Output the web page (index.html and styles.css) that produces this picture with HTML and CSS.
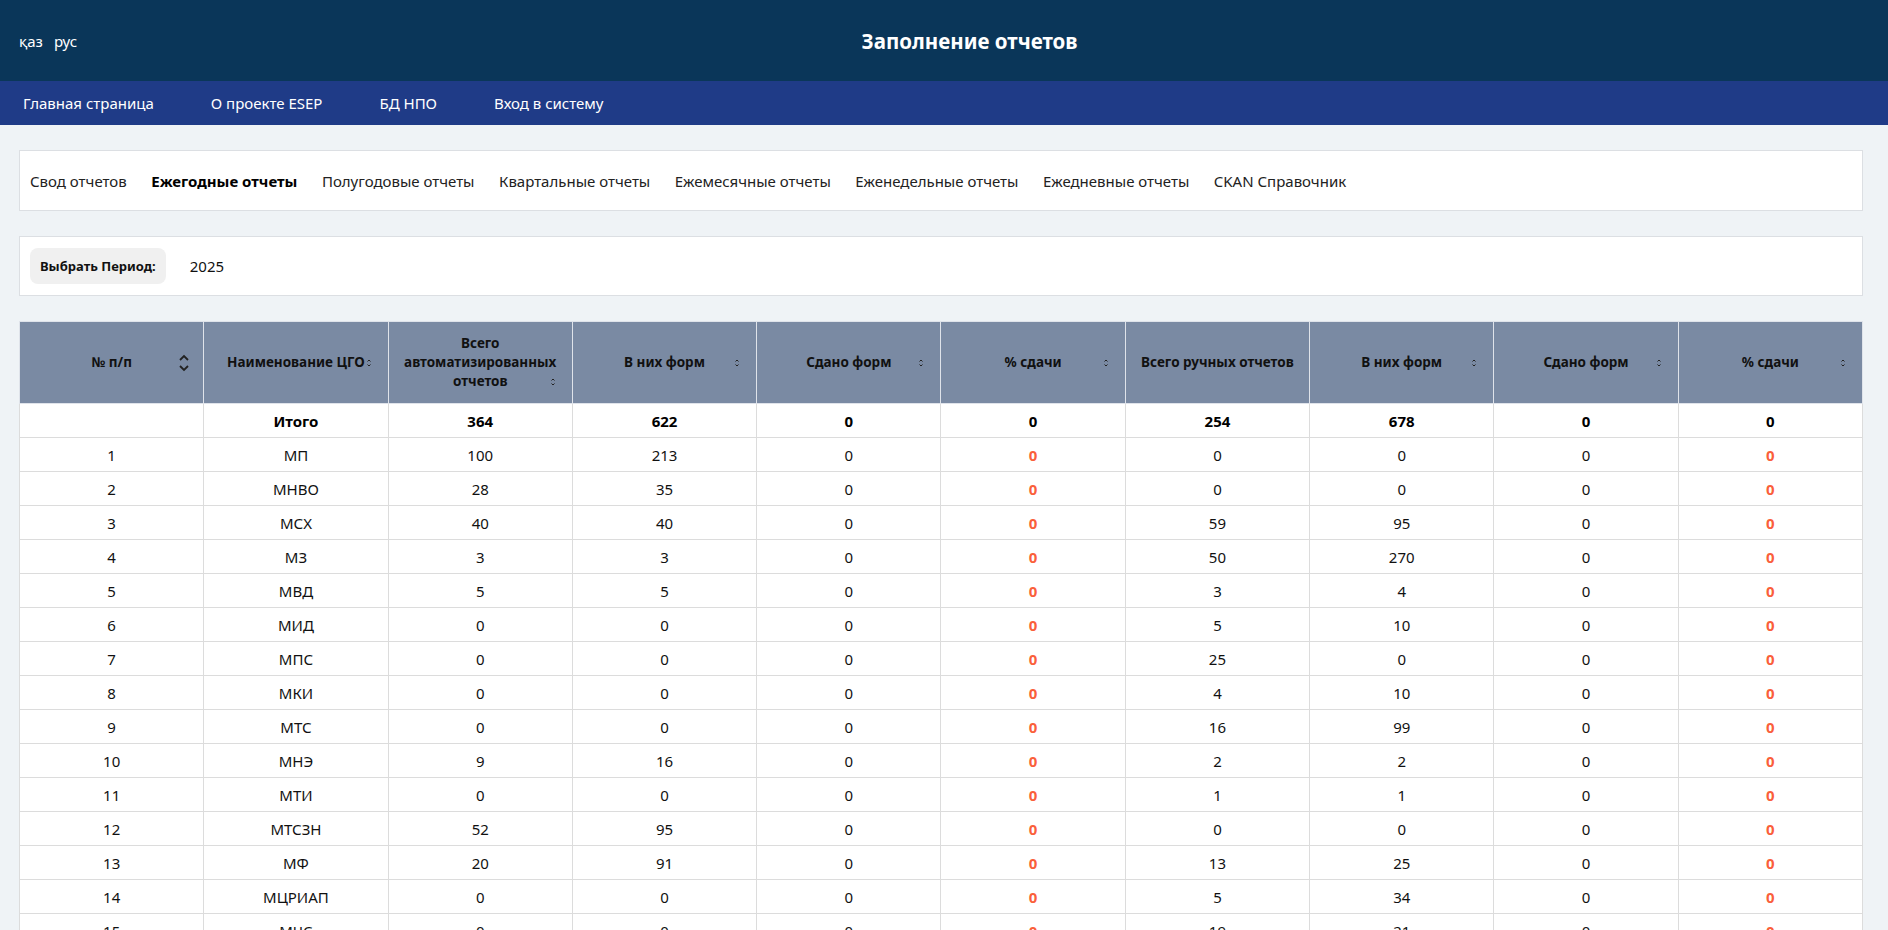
FILE: index.html
```html
<!DOCTYPE html>
<html lang="ru">
<head>
<meta charset="utf-8">
<title>Заполнение отчетов</title>
<link rel="stylesheet" href="styles.css">
</head>
<body>
<header class="topbar">
  <div class="lang"><span>қаз</span><span>рус</span></div>
  <h1 class="title">Заполнение отчетов</h1>
</header>
<nav class="mainnav">
  <a>Главная страница</a>
  <a>О проекте ESEP</a>
  <a>БД НПО</a>
  <a>Вход в систему</a>
</nav>
<main class="content">
  <div class="card tabs">
    <span>Свод отчетов</span>
    <span class="active">Ежегодные отчеты</span>
    <span>Полугодовые отчеты</span>
    <span>Квартальные отчеты</span>
    <span>Ежемесячные отчеты</span>
    <span>Еженедельные отчеты</span>
    <span>Ежедневные отчеты</span>
    <span>CKAN Справочник</span>
  </div>
  <div class="card period">
    <span class="period-btn">Выбрать Период:</span>
    <span class="period-val">2025</span>
  </div>
  <table class="grid">
    <thead>
      <tr>
        <th><div class="th"><span class="tt">№ п/п</span><svg class="sort big" viewBox="0 0 12 20"><path d="M2 7 L6 3 L10 7" /><path d="M2 13 L6 17 L10 13" /></svg></div></th>
        <th><div class="th"><span class="tt">Наименование ЦГО</span><svg class="sort" viewBox="0 0 6 10"><path d="M1.5 3.5 L3 2 L4.5 3.5" /><path d="M1.5 6.5 L3 8 L4.5 6.5" /></svg></div></th>
        <th><div class="th low"><span class="tt">Всего автоматизированных отчетов</span><svg class="sort" viewBox="0 0 6 10"><path d="M1.5 3.5 L3 2 L4.5 3.5" /><path d="M1.5 6.5 L3 8 L4.5 6.5" /></svg></div></th>
        <th><div class="th"><span class="tt">В них форм</span><svg class="sort" viewBox="0 0 6 10"><path d="M1.5 3.5 L3 2 L4.5 3.5" /><path d="M1.5 6.5 L3 8 L4.5 6.5" /></svg></div></th>
        <th><div class="th"><span class="tt">Сдано форм</span><svg class="sort" viewBox="0 0 6 10"><path d="M1.5 3.5 L3 2 L4.5 3.5" /><path d="M1.5 6.5 L3 8 L4.5 6.5" /></svg></div></th>
        <th><div class="th"><span class="tt">% сдачи</span><svg class="sort" viewBox="0 0 6 10"><path d="M1.5 3.5 L3 2 L4.5 3.5" /><path d="M1.5 6.5 L3 8 L4.5 6.5" /></svg></div></th>
        <th><div class="th"><span class="tt">Всего ручных отчетов</span><svg class="sort" viewBox="0 0 6 10"><path d="M1.5 3.5 L3 2 L4.5 3.5" /><path d="M1.5 6.5 L3 8 L4.5 6.5" /></svg></div></th>
        <th><div class="th"><span class="tt">В них форм</span><svg class="sort" viewBox="0 0 6 10"><path d="M1.5 3.5 L3 2 L4.5 3.5" /><path d="M1.5 6.5 L3 8 L4.5 6.5" /></svg></div></th>
        <th><div class="th"><span class="tt">Сдано форм</span><svg class="sort" viewBox="0 0 6 10"><path d="M1.5 3.5 L3 2 L4.5 3.5" /><path d="M1.5 6.5 L3 8 L4.5 6.5" /></svg></div></th>
        <th><div class="th"><span class="tt">% сдачи</span><svg class="sort" viewBox="0 0 6 10"><path d="M1.5 3.5 L3 2 L4.5 3.5" /><path d="M1.5 6.5 L3 8 L4.5 6.5" /></svg></div></th>
      </tr>
    </thead>
    <tbody>
      <tr class="total"><td></td><td>Итого</td><td>364</td><td>622</td><td>0</td><td>0</td><td>254</td><td>678</td><td>0</td><td>0</td></tr>
      <tr><td>1</td><td>МП</td><td>100</td><td>213</td><td>0</td><td class="pct">0</td><td>0</td><td>0</td><td>0</td><td class="pct">0</td></tr>
      <tr><td>2</td><td>МНВО</td><td>28</td><td>35</td><td>0</td><td class="pct">0</td><td>0</td><td>0</td><td>0</td><td class="pct">0</td></tr>
      <tr><td>3</td><td>МСХ</td><td>40</td><td>40</td><td>0</td><td class="pct">0</td><td>59</td><td>95</td><td>0</td><td class="pct">0</td></tr>
      <tr><td>4</td><td>МЗ</td><td>3</td><td>3</td><td>0</td><td class="pct">0</td><td>50</td><td>270</td><td>0</td><td class="pct">0</td></tr>
      <tr><td>5</td><td>МВД</td><td>5</td><td>5</td><td>0</td><td class="pct">0</td><td>3</td><td>4</td><td>0</td><td class="pct">0</td></tr>
      <tr><td>6</td><td>МИД</td><td>0</td><td>0</td><td>0</td><td class="pct">0</td><td>5</td><td>10</td><td>0</td><td class="pct">0</td></tr>
      <tr><td>7</td><td>МПС</td><td>0</td><td>0</td><td>0</td><td class="pct">0</td><td>25</td><td>0</td><td>0</td><td class="pct">0</td></tr>
      <tr><td>8</td><td>МКИ</td><td>0</td><td>0</td><td>0</td><td class="pct">0</td><td>4</td><td>10</td><td>0</td><td class="pct">0</td></tr>
      <tr><td>9</td><td>МТС</td><td>0</td><td>0</td><td>0</td><td class="pct">0</td><td>16</td><td>99</td><td>0</td><td class="pct">0</td></tr>
      <tr><td>10</td><td>МНЭ</td><td>9</td><td>16</td><td>0</td><td class="pct">0</td><td>2</td><td>2</td><td>0</td><td class="pct">0</td></tr>
      <tr><td>11</td><td>МТИ</td><td>0</td><td>0</td><td>0</td><td class="pct">0</td><td>1</td><td>1</td><td>0</td><td class="pct">0</td></tr>
      <tr><td>12</td><td>МТСЗН</td><td>52</td><td>95</td><td>0</td><td class="pct">0</td><td>0</td><td>0</td><td>0</td><td class="pct">0</td></tr>
      <tr><td>13</td><td>МФ</td><td>20</td><td>91</td><td>0</td><td class="pct">0</td><td>13</td><td>25</td><td>0</td><td class="pct">0</td></tr>
      <tr><td>14</td><td>МЦРИАП</td><td>0</td><td>0</td><td>0</td><td class="pct">0</td><td>5</td><td>34</td><td>0</td><td class="pct">0</td></tr>
      <tr><td>15</td><td>МЧС</td><td>0</td><td>0</td><td>0</td><td class="pct">0</td><td>19</td><td>21</td><td>0</td><td class="pct">0</td></tr>
      <tr><td>16</td><td>МЭ</td><td>0</td><td>0</td><td>0</td><td class="pct">0</td><td>0</td><td>0</td><td>0</td><td class="pct">0</td></tr>
    </tbody>
  </table>
</main>
</body>
</html>
```

FILE: styles.css
```css
* { box-sizing: border-box; }
html, body { margin: 0; padding: 0; }
body {
  background: #eff3f6;
  font-family: "Noto Sans", "Open Sans", sans-serif;
  color: #111;
  font-size: 15px;
}
.topbar {
  background: #0a3659;
  height: 81px;
  display: flex;
  align-items: center;
  padding: 0 26px 0 19px;
  color: #fff;
}
.lang { display: flex; gap: 11px; font-size: 15px; }
.title {
  flex: 1;
  margin: 0;
  text-align: center;
  font-size: 20.5px;
  font-weight: 700;
}
.mainnav {
  background: #1f3b87;
  height: 44px;
  display: flex;
  align-items: center;
  gap: 57px;
  padding: 0 23px;
}
.mainnav a { color: #fff; font-size: 15px; }
.content { padding: 25px 25px 0 19px; }
.card {
  background: #fff;
  border: 1px solid #dcdfe3;
  display: flex;
  align-items: center;
}
.tabs { height: 61px; padding: 0 10px; gap: 24.5px; color: #222; font-size: 15px; }
.tabs .active { font-weight: 700; color: #000; }
.period { margin-top: 25px; height: 60px; padding: 0 10px; gap: 24px; }
.period-btn {
  background: #f0f0f0;
  border-radius: 8px;
  height: 36px;
  padding: 0 10px;
  display: flex;
  align-items: center;
  font-size: 13px;
  font-weight: 700;
  color: #111;
}
.period-val { font-size: 15px; }
.grid {
  margin-top: 25px;
  width: 100%;
  border-collapse: collapse;
  table-layout: fixed;
  background: #fff;
}
.grid th {
  background: #7a8aa3;
  height: 82px;
  padding: 0;
  border: 1px solid #dfe3ea;
  font-size: 13.5px;
  font-weight: 700;
  color: #111;
  vertical-align: middle;
}
.th {
  position: relative;
  padding: 0 14px;
  text-align: center;
}
.th .tt { display: block; line-height: 19px; }
.sort {
  position: absolute;
  right: 16px;
  top: 50%;
  width: 6px;
  height: 10px;
  margin-top: -5px;
  fill: none;
  stroke: #222;
  stroke-width: 1;
}
.th.low .sort { margin-top: 14px; }
.sort.big { width: 12px; height: 20px; margin-top: -10px; right: 13px; stroke-width: 1.8; }
.grid td {
  height: 34px;
  border: 1px solid #dcdcdc;
  text-align: center;
  font-size: 15px;
  color: #111;
  padding: 0 8px;
}
.grid tr.total td { font-weight: 700; color: #000; }
.grid td.pct { color: #fa5f3b; font-weight: 700; }
```
